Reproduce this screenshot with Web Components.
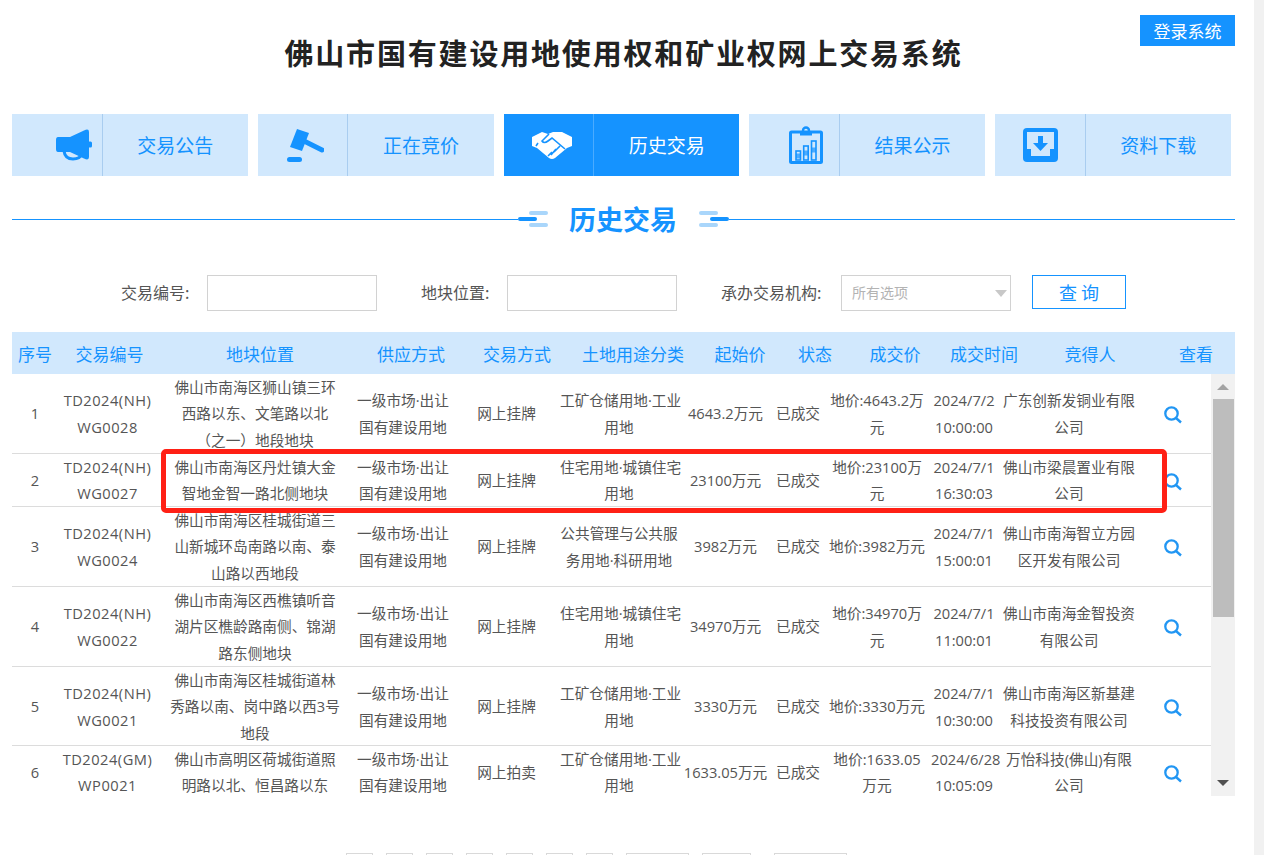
<!DOCTYPE html>
<html lang="zh-CN">
<head>
<meta charset="utf-8">
<title>佛山市国有建设用地使用权和矿业权网上交易系统</title>
<style>
html,body{margin:0;padding:0;height:855px;overflow:hidden;background:#fff}
body{font-family:"Noto Sans CJK SC","Liberation Sans",sans-serif;color:#555}
</style>
</head>
<body>
<app-shell>
  <site-header title-text="佛山市国有建设用地使用权和矿业权网上交易系统" action="登录系统"></site-header>
  <nav-bar>
    <nav-tile label="交易公告" pad="44">
      <svg slot="icon" width="36" height="32" viewBox="0 0 36 32" fill="currentColor"><path d="M2 8H14L28 1.500Q33 -1 33 3V28Q33 32 28 29.500L14 23H2Q0 23 0 20V11Q0 8 2 8Z"/><rect x="32" y="12.500" width="4" height="6" rx="1.500"/><path d="M8 22Q9 30 17 30Q24 30 26 25" fill="none" stroke="currentColor" stroke-width="3"/></svg>
    </nav-tile>
    <nav-tile label="正在竞价" pad="29">
      <svg slot="icon" width="37" height="33" viewBox="0 0 37 33" fill="currentColor"><path d="M10 0L22 4L15 22L3 18Z"/><path d="M17 12L35 21" stroke="currentColor" stroke-width="5" stroke-linecap="round"/><rect x="0" y="28" width="15" height="5" rx="2.500"/></svg>
    </nav-tile>
    <nav-tile label="历史交易" pad="28" active>
      <svg slot="icon" width="40" height="28" viewBox="0 0 40 28" fill="#fff"><path d="M0 6L10 1L16 3L21 1L30 1L40 6V15L35 17L23 27Q20 29 17 27L5 17L0 15Z"/><path d="M17 3L10 10Q12 13 16 10L20 7L33 18M28 15L22 21M24 18L19 24M20 21L16 25M6 12L4 15" fill="none" stroke="#1593ff" stroke-width="1.600"/></svg>
    </nav-tile>
    <nav-tile label="结果公示" pad="40">
      <svg slot="icon" width="34" height="38" viewBox="0 0 34 38" fill="none" stroke="currentColor"><rect x="1.500" y="6" width="31" height="30.500" rx="1" stroke-width="3"/><circle cx="17" cy="4.500" r="3" stroke-width="2.400"/><path d="M11 8H23" stroke-width="3"/><rect x="7" y="25" width="4.500" height="9" stroke-width="1.600"/><rect x="14.700" y="20" width="4.500" height="14" stroke-width="1.600"/><rect x="22.500" y="15" width="4.500" height="19" stroke-width="1.600"/><path d="M7 30H11.500M14.700 27H19.200M22.500 24H27" stroke-width="5" opacity=".7"/></svg>
    </nav-tile>
    <nav-tile label="资料下载" pad="28">
      <svg slot="icon" width="35" height="34" viewBox="0 0 35 34"><rect width="35" height="34" rx="4" fill="currentColor"/><path d="M4 4H31V21H27V28H8V21H4Z" fill="#d1e8fd"/><path d="M15 8H20V15H25L17.500 23L10 15H15Z" fill="currentColor"/></svg>
    </nav-tile>
  </nav-bar>
  <section-heading>历史交易</section-heading>
  <filter-bar>
    <filter-field label="交易编号" lw="86"></filter-field>
    <filter-field label="地块位置" lw="86"></filter-field>
    <filter-field label="承办交易机构" lw="120" kind="select" placeholder="所有选项"></filter-field>
    <query-button>查 询</query-button>
  </filter-bar>
  <deal-table>
    <deal-row style="--h:80px"><span>1</span><span>TD2024(NH)<br>WG0028</span><span>佛山市南海区狮山镇三环<br>西路以东、文笔路以北<br>（之一）地段地块</span><span>一级市场·出让<br>国有建设用地</span><span>网上挂牌</span><span>工矿仓储用地·工业<br>用地</span><span>4643.2万元</span><span>已成交</span><span>地价:4643.2万<br>元</span><span>2024/7/2<br>10:00:00</span><span>广东创新发铜业有限<br>公司</span><span><search-icon></search-icon></span></deal-row>
    <deal-row style="--h:53px"><span>2</span><span>TD2024(NH)<br>WG0027</span><span>佛山市南海区丹灶镇大金<br>智地金智一路北侧地块</span><span>一级市场·出让<br>国有建设用地</span><span>网上挂牌</span><span>住宅用地·城镇住宅<br>用地</span><span>23100万元</span><span>已成交</span><span>地价:23100万<br>元</span><span>2024/7/1<br>16:30:03</span><span>佛山市梁晨置业有限<br>公司</span><span><search-icon></search-icon></span></deal-row>
    <deal-row style="--h:80px"><span>3</span><span>TD2024(NH)<br>WG0024</span><span>佛山市南海区桂城街道三<br>山新城环岛南路以南、泰<br>山路以西地段</span><span>一级市场·出让<br>国有建设用地</span><span>网上挂牌</span><span>公共管理与公共服<br>务用地·科研用地</span><span>3982万元</span><span>已成交</span><span>地价:3982万元</span><span>2024/7/1<br>15:00:01</span><span>佛山市南海智立方园<br>区开发有限公司</span><span><search-icon></search-icon></span></deal-row>
    <deal-row style="--h:80px"><span>4</span><span>TD2024(NH)<br>WG0022</span><span>佛山市南海区西樵镇听音<br>湖片区樵龄路南侧、锦湖<br>路东侧地块</span><span>一级市场·出让<br>国有建设用地</span><span>网上挂牌</span><span>住宅用地·城镇住宅<br>用地</span><span>34970万元</span><span>已成交</span><span>地价:34970万<br>元</span><span>2024/7/1<br>11:00:01</span><span>佛山市南海金智投资<br>有限公司</span><span><search-icon></search-icon></span></deal-row>
    <deal-row style="--h:79px"><span>5</span><span>TD2024(NH)<br>WG0021</span><span>佛山市南海区桂城街道林<br>秀路以南、岗中路以西3号<br>地段</span><span>一级市场·出让<br>国有建设用地</span><span>网上挂牌</span><span>工矿仓储用地·工业<br>用地</span><span>3330万元</span><span>已成交</span><span>地价:3330万元</span><span>2024/7/1<br>10:30:00</span><span>佛山市南海区新基建<br>科技投资有限公司</span><span><search-icon></search-icon></span></deal-row>
    <deal-row style="--h:53px"><span>6</span><span>TD2024(GM)<br>WP0021</span><span>佛山市高明区荷城街道照<br>明路以北、恒昌路以东</span><span>一级市场·出让<br>国有建设用地</span><span>网上拍卖</span><span>工矿仓储用地·工业<br>用地</span><span>1633.05万元</span><span>已成交</span><span>地价:1633.05<br>万元</span><span>2024/6/28<br>10:05:09</span><span>万怡科技(佛山)有限<br>公司</span><span><search-icon></search-icon></span></deal-row>
  </deal-table>
  <page-strip></page-strip>
</app-shell>
<script>
const mk = (name, html) => customElements.define(name, class extends HTMLElement {
  connectedCallback() {
    if (this.shadowRoot) return;
    const r = this.attachShadow({mode: 'open'});
    r.innerHTML = typeof html === 'function' ? html(this) : html;
  }
});

mk('app-shell', `<style>
:host{display:flex;height:855px;overflow:hidden}
.main{width:1254px;box-sizing:border-box;padding:0 19px 0 12px;flex:none}
.rail{flex:1;background:#f1f1f1}
</style><div class="main"><slot></slot></div><div class="rail"></div>`);

mk('site-header', h => `<style>
:host{display:grid;grid-template-columns:1fr auto 1fr;height:114px}
h1{margin:36px 0 0;font:700 29px/32px "Noto Sans CJK SC",sans-serif;letter-spacing:1.82px;color:#222;white-space:nowrap}
a{justify-self:end;align-self:start;margin-top:15px;width:95px;height:31px;background:#1593ff;color:#fff;font-size:17px;line-height:31px;text-align:center}
</style><span></span><h1>${h.getAttribute('title-text')}</h1><a>${h.getAttribute('action')}</a>`);

mk('nav-bar', `<style>:host{display:flex;gap:10px;width:1218.8px;height:62px}</style><slot></slot>`);

mk('nav-tile', h => `<style>
:host{display:grid;grid-template-columns:89.6px 1fr;flex:1 1 0;height:62px;background:${h.hasAttribute('active') ? '#1593ff' : '#d1e8fd'};color:${h.hasAttribute('active') ? '#fff' : '#1593ff'}}
.i{display:flex;align-items:center;padding-left:${h.getAttribute('pad')}px;box-sizing:border-box;color:#1593ff}
.t{border-left:1px solid ${h.hasAttribute('active') ? '#4aabff' : '#a9cdf0'};display:flex;align-items:center;justify-content:center;font-size:19px;padding-bottom:2px;box-sizing:border-box}
::slotted(svg){display:block;flex:none}
</style><div class="i"><slot name="icon"></slot></div><div class="t">${h.getAttribute('label')}</div>`);

mk('section-heading', `<style>
:host{display:flex;align-items:center;height:62px;margin-top:12px;width:1223px}
.l{height:1px;background:#1593ff}
.a{flex:none;width:506px}
.b{flex:1}
svg{display:block;flex:none}
b{font-size:27px;line-height:40px;font-weight:700;color:#1593ff;margin:0 22px 0 21px}
</style><div class="l a"></div>
<svg width="30" height="16" viewBox="0 0 30 16"><rect x="11" y="0" width="19" height="4" rx="2" fill="#a9d6fb"/><rect x="11" y="12" width="19" height="4" rx="2" fill="#a9d6fb"/><rect x="0" y="6" width="19" height="4" rx="2" fill="#1593ff"/></svg>
<b><slot></slot></b>
<svg width="30" height="16" viewBox="0 0 30 16"><rect x="0" y="0" width="19" height="4" rx="2" fill="#a9d6fb"/><rect x="0" y="12" width="19" height="4" rx="2" fill="#a9d6fb"/><rect x="11" y="6" width="19" height="4" rx="2" fill="#1593ff"/></svg>
<div class="l b"></div>`);

mk('filter-bar', `<style>:host{display:flex;align-items:flex-start;gap:44px;padding:25px 0 0 109px;height:57px;box-sizing:content-box}</style><slot></slot>`);

mk('filter-field', h => {
  const sel = h.getAttribute('kind') === 'select';
  return `<style>
:host{display:flex;align-items:center;height:36px;font-size:16px;color:#555;white-space:nowrap}
.lab{width:${h.getAttribute('lw')}px;padding-bottom:2px}
.box{width:170px;height:36px;box-sizing:border-box;border:1px solid #d2d2d2;background:#fff;display:flex;align-items:center;padding:0 3px 2px 10px;font-size:14px;color:#b3b3b3}
.c{margin-left:auto;margin-top:2px;width:0;height:0;border:6px solid transparent;border-top:7px solid #c8c8c8;border-bottom:0}
</style><span class="lab">${h.getAttribute('label')}:</span><div class="box">${sel ? `<span>${h.getAttribute('placeholder')}</span><i class="c"></i>` : ''}</div>`;
});

mk('query-button', `<style>
:host{display:flex;align-items:center;justify-content:center;width:94px;height:34px;box-sizing:border-box;border:1px solid #1593ff;color:#1593ff;font-size:18px;margin-left:-23px;white-space:pre}
</style><slot></slot>`);

const HEAD = ['序号','交易编号','地块位置','供应方式','交易方式','土地用途分类','起始价','状态','成交价','成交时间','竞得人','查看'];
mk('deal-table', `<style>
:host{display:block;position:relative;width:1223px}
.head{display:grid;grid-template-columns:46px 104px 196px 106px 106px 126px 88px 62px 98px 80px 132px 79px;height:42px;background:#d1e8fd;color:#1593ff;font-size:17px;line-height:44px;text-align:center}
.head div:nth-child(2){padding-right:1px}
.head div:last-child{padding-left:1px}
.body{display:flex;height:422px;overflow:hidden}
.rows{width:1199px;flex:none}
.bar{flex:1;background:#f1f1f1;display:flex;flex-direction:column;align-items:center;padding-top:10px;padding-bottom:10px;box-sizing:border-box}
.up{width:0;height:0;border:6px solid transparent;border-bottom:6px solid #a3a3a3;border-top:0}
.thumb{width:21px;height:218px;background:#bdbdbd;margin-top:9px}
.down{width:0;height:0;border:6px solid transparent;border-top:6px solid #505050;border-bottom:0;margin-top:auto}
.mark{position:absolute;left:149px;top:117px;width:1006px;height:64px;box-sizing:border-box;border:5px solid #ff2015;border-radius:5px;pointer-events:none}
</style>
<div class="head">${HEAD.map(t => `<div>${t}</div>`).join('')}</div>
<div class="body"><div class="rows"><slot></slot></div><div class="bar"><i class="up"></i><i class="thumb"></i><i class="down"></i></div></div>
<div class="mark"></div>`);

mk('deal-row', `<style>
:host{display:grid;grid-template-columns:46px 99px 196px 100px 107px 118px 95px 50px 108px 66px 144px 64px;height:var(--h);box-sizing:border-box;border-bottom:1px solid #dcdcdc;align-items:center;text-align:center;font-family:"Open Sans","Noto Sans CJK SC",sans-serif;font-size:14.667px;line-height:26.4px;color:#555;white-space:nowrap}
::slotted(span){display:block}
::slotted(span:nth-child(2)){letter-spacing:.5px}
</style><slot></slot>`);

mk('search-icon', `<style>:host{display:inline-block;width:18px;height:18px;vertical-align:middle}svg{display:block}</style>
<svg width="18" height="18" viewBox="0 0 18 18" fill="none" stroke="#2196f3"><circle cx="7.5" cy="7.5" r="6.2" stroke-width="2.3"/><path d="M12 12L17 16.5" stroke-width="2.4"/></svg>`);

mk('page-strip', `<style>
:host{display:flex;gap:13px;padding-left:334px;margin-top:57px;height:30px}
i{display:block;width:25px;height:28px;border:1px solid #d9d9d9}
.w1{width:61px}.w2{width:47px}.w3{width:71px;margin-left:10px}
</style><i></i><i></i><i></i><i></i><i></i><i></i><i></i><i class="w1"></i><i class="w2"></i><i class="w3"></i>`);
</script>
</body>
</html>
